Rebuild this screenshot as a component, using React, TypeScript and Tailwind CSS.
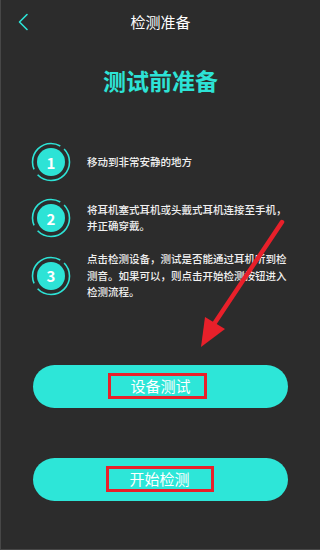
import React from 'react';

const font = { fontFamily: '"Noto Sans CJK SC", "Noto Sans", sans-serif' };

const steps = [
  { n: 1, lines: ['移动到非常安静的地方'], mt: 'mt-[46px]' },
  { n: 2, lines: ['将耳机塞式耳机或头戴式耳机连接至手机，', '并正确穿戴。'], mt: 'mt-[16px]' },
  { n: 3, lines: ['点击检测设备，测试是否能通过耳机听到检', '测音。如果可以，则点击开始检测按钮进入', '检测流程。'], mt: 'mt-[13px]' },
];

const StepBadge = ({ n }: { n: number }) => (
  <div className="relative w-10 h-10 flex-shrink-0 flex items-center justify-center">
    <svg width="40" height="40" viewBox="0 0 40 40" className="absolute inset-0">
      <circle cx="20" cy="20" r="14" fill="#2de3d6" />
      {/* broken ring: gaps near 1 o'clock and 8 o'clock */}
      <circle
        cx="20" cy="20" r="18.5" fill="none" stroke="#2de3d6" strokeWidth="1.6"
        strokeDasharray="58.1 6.4 46.9 4.8" strokeDashoffset="-14.5" transform="rotate(-90 20 20)"
      />
    </svg>
    <span className="relative text-white text-[15px] font-bold leading-none">{n}</span>
  </div>
);

const RedBox: React.FC<{ children: React.ReactNode; className?: string }> = ({ children, className = '' }) => (
  <span className={`inline-block border-[3px] border-[#e8202a] leading-[20px] ${className}`}>
    {children}
  </span>
);

export default function App() {
  return (
    <div className="relative w-[320px] h-[550px] bg-[#2c2c2c] overflow-hidden border-l border-b border-[#474747]" style={font}>
      <div className="h-[44px] flex items-center">
        <div className="w-[44px] flex justify-start pl-[16px]">
          <svg width="12" height="18" viewBox="0 0 12 18" fill="none">
            <path d="M10 1.5L2.5 9L10 16.5" stroke="#2de3d6" strokeWidth="1.6" strokeLinecap="round" strokeLinejoin="round" />
          </svg>
        </div>
        <div className="flex-1 text-center text-white text-[15px]">检测准备</div>
        <div className="w-[44px]" />
      </div>

      <h1 className="mt-[20px] text-center text-[#2de3d6] text-[23px] font-bold leading-[32px]">测试前准备</h1>

      <div className="pl-[30px] pr-[10px]">
        {steps.map((s) => (
          <div key={s.n} className={`flex items-center ${s.mt}`}>
            <StepBadge n={s.n} />
            <div className="ml-[16px] text-[#f0f0f0] text-[10.5px] font-medium leading-[16.5px] whitespace-nowrap">
              {s.lines.map((l, i) => (
                <div key={i}>{l}</div>
              ))}
            </div>
          </div>
        ))}
      </div>

      <div className="mx-[32px] mt-[64px] h-[43px] rounded-full bg-[#2de6d8] flex items-center justify-center">
        <RedBox className="pl-[19px] pr-[13px] ml-[-6px] text-white text-[15px]">设备测试</RedBox>
      </div>

      <div className="mx-[32px] mt-[50px] h-[43px] rounded-full bg-[#2de6d8] flex items-center justify-center">
        <RedBox className="pl-[20px] pr-[21px] ml-[-1px] text-white text-[15px]">开始检测</RedBox>
      </div>

      <svg width="320" height="550" viewBox="0 0 320 550" className="absolute inset-0 pointer-events-none">
        <line x1="281" y1="222" x2="213" y2="324" stroke="#e8202a" strokeWidth="4.5" strokeLinecap="round" />
        <polygon points="200,347 204,317 224,329" fill="#e8202a" />
      </svg>
    </div>
  );
}
